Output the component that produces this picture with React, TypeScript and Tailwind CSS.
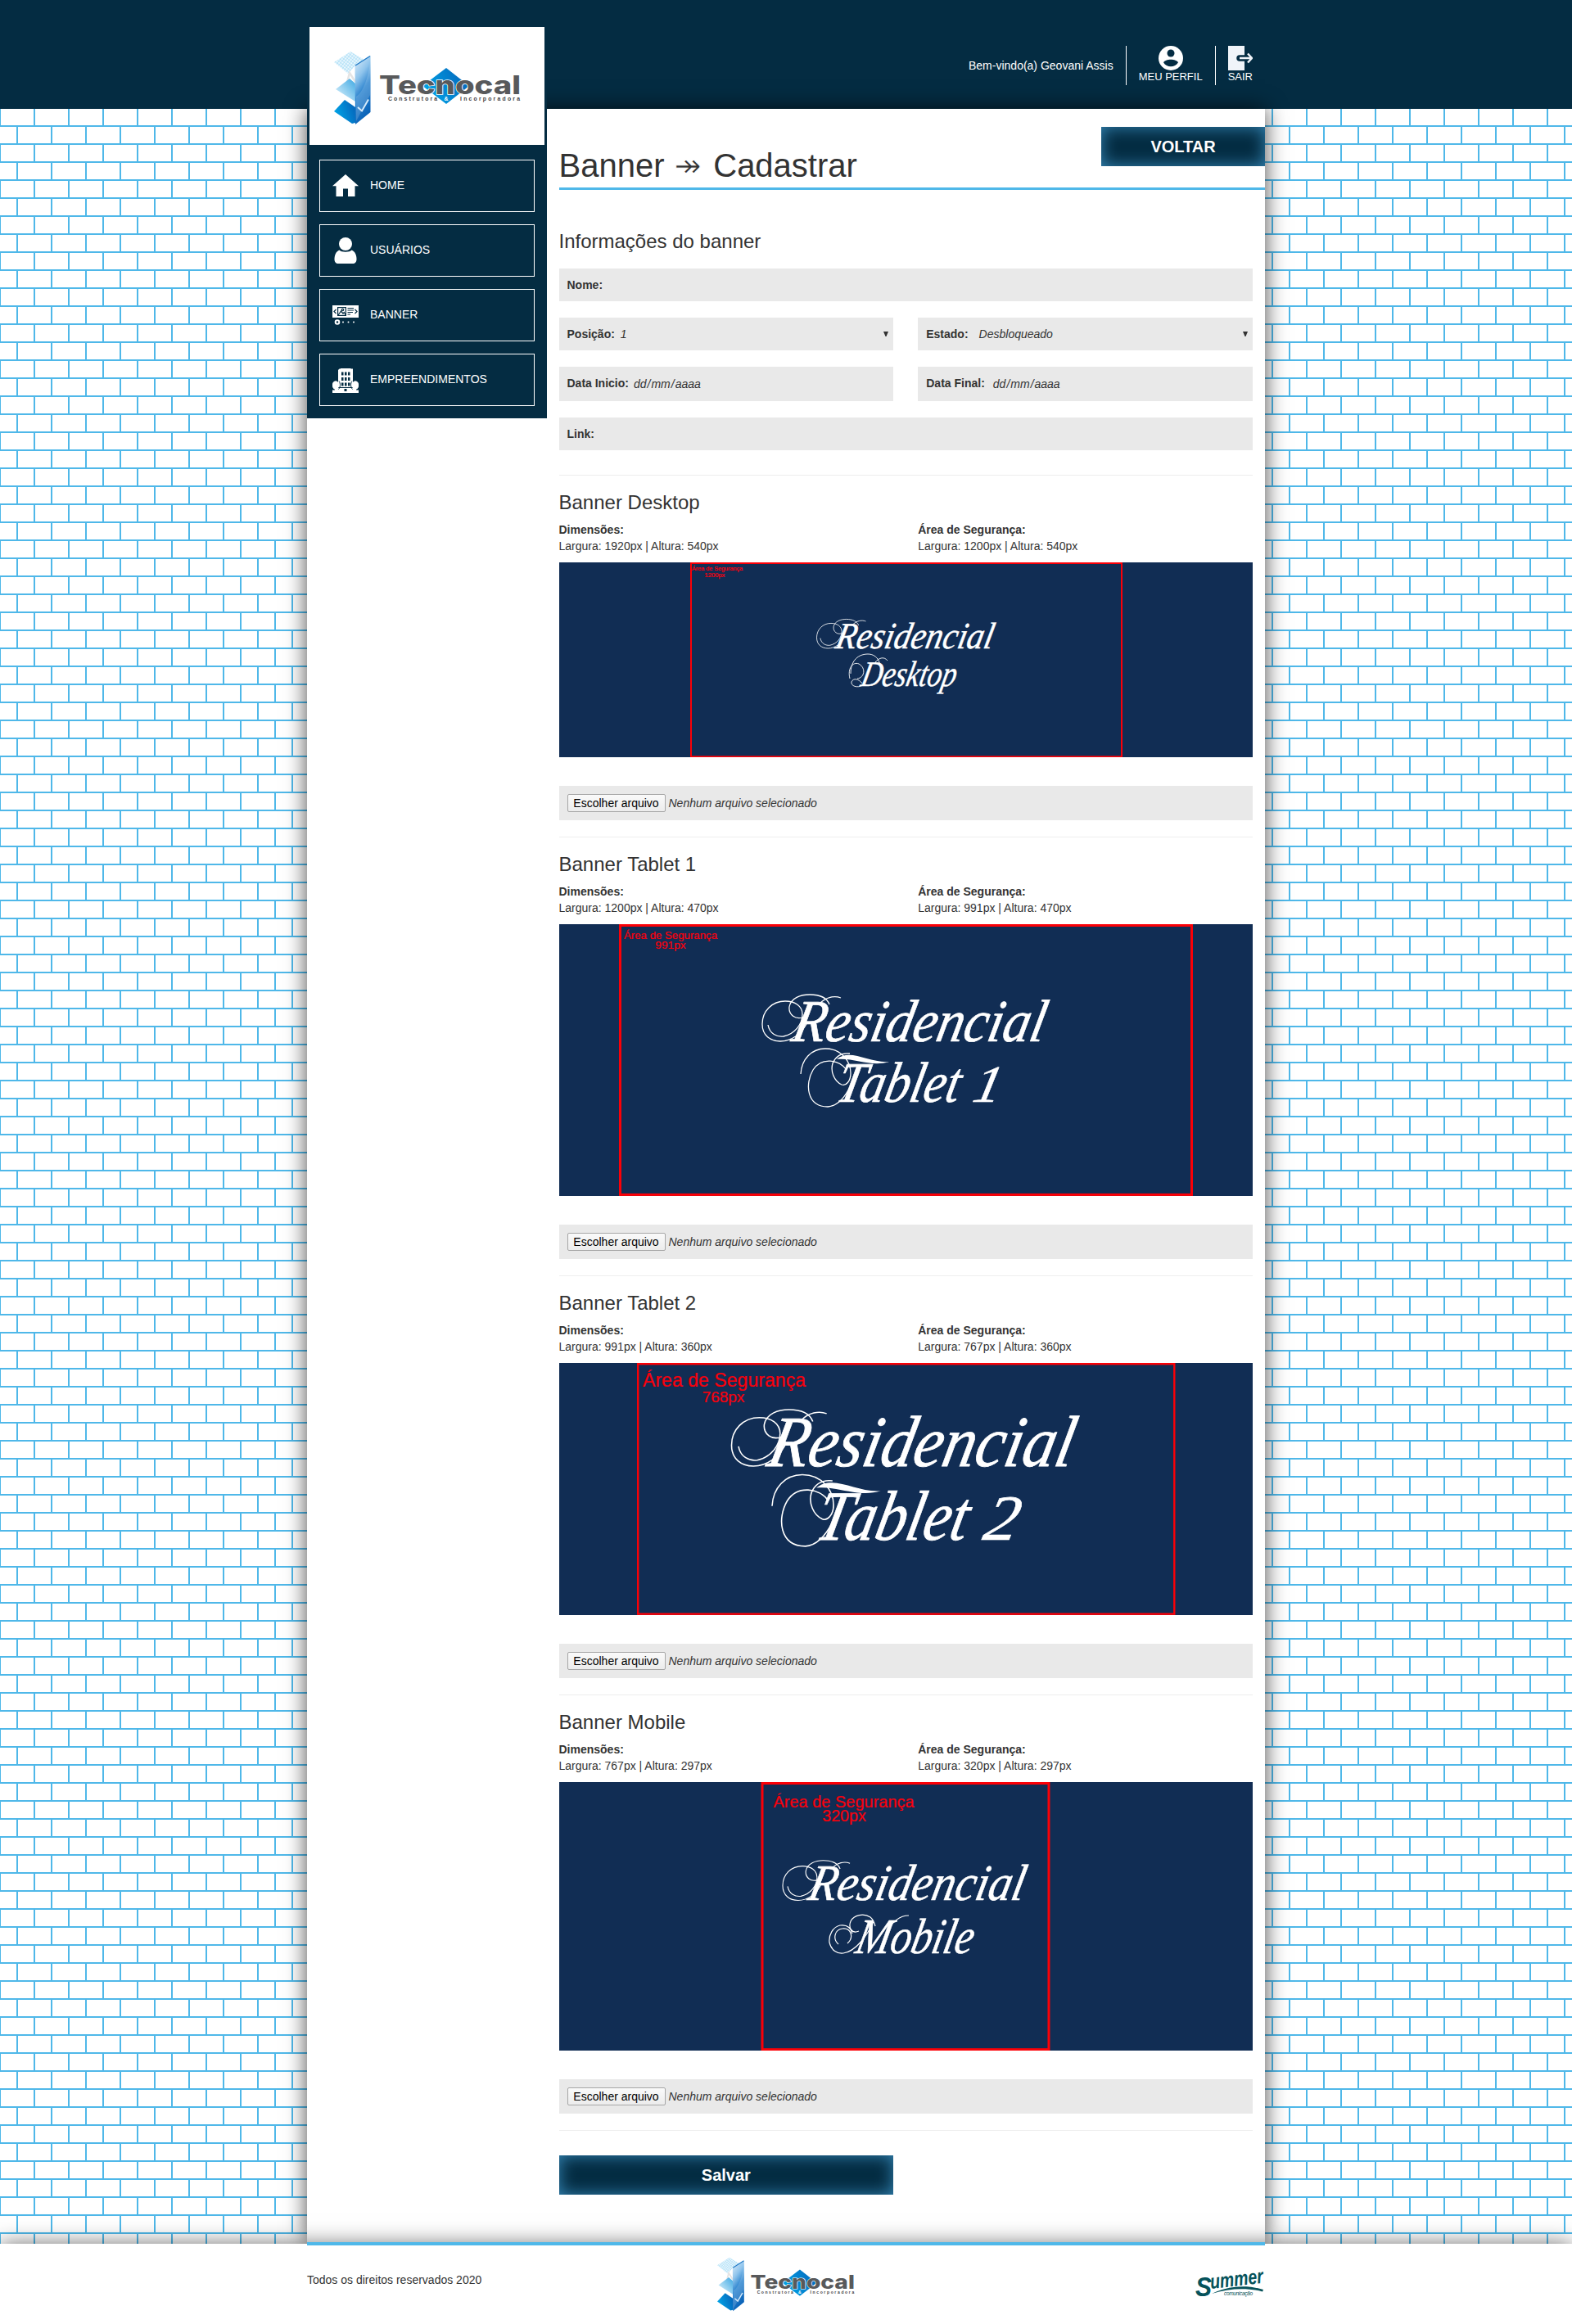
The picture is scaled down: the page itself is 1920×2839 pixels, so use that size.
import type { ReactNode } from "react";

const SERIF = "'Liberation Serif', serif";
const SANS = "'Liberation Sans', Arial, sans-serif";

function Bricks() {
  return (
    <svg className="absolute inset-0 h-full w-full" aria-hidden="true">
      <defs>
        <pattern id="bricks" width="42" height="44" patternUnits="userSpaceOnUse">
          <rect width="42" height="44" fill="#fff" />
          <g fill="#4fb8e9" shapeRendering="crispEdges">
            <rect width="42" height="1" />
            <rect y="21" width="42" height="2" />
            <rect y="43" width="42" height="1" />
            <rect width="1" height="22" />
            <rect x="41" width="1" height="22" />
            <rect x="20" y="22" width="2" height="22" />
          </g>
        </pattern>
      </defs>
      <rect width="100%" height="100%" fill="url(#bricks)" />
    </svg>
  );
}

function Logo({ className, id }: { className: string; id: string }) {
  return (
    <svg viewBox="0 0 228 91" className={className} role="img" aria-label="Tecnocal">
      <defs>
        <linearGradient id={id + "-panel"} x1="0" y1="0" x2="0.3" y2="1">
          <stop offset="0" stopColor="#e3f1fc" />
          <stop offset="0.35" stopColor="#8fc4ec" />
          <stop offset="0.6" stopColor="#2f86d0" />
          <stop offset="1" stopColor="#0a63b8" />
        </linearGradient>
        <linearGradient id={id + "-dia"} x1="0" y1="0.7" x2="1" y2="0.3">
          <stop offset="0" stopColor="#00a8ea" />
          <stop offset="1" stopColor="#0566bb" />
        </linearGradient>
        <linearGradient id={id + "-mid"} x1="0" y1="1" x2="1" y2="0">
          <stop offset="0" stopColor="#e8f7fe" />
          <stop offset="1" stopColor="#3fa9e3" />
        </linearGradient>
        <pattern id={id + "-grid"} width="3" height="3" patternUnits="userSpaceOnUse" patternTransform="rotate(38)">
          <rect width="3" height="3" fill="#eaf7fe" />
          <path d="M0 0H3M0 0V3" stroke="#8fd0f2" strokeWidth="0.9" />
        </pattern>
      </defs>
      <path d="M0 14 20 1 37 11 26 17V18L17 28Z" fill={`url(#${id}-grid)`} />
      <path d="M14 46 19 27 26 38" fill="none" stroke="#e4e4e4" strokeWidth="2.5" />
      <path d="M2 47 19 34 26 40V62Z" fill={`url(#${id}-mid)`} />
      <path d="M0 74 13 60 26 69V88L22 89Z" fill={`url(#${id}-dia)`} />
      <path d="M25.5 18 44.5 6V75L26 90Z" fill={`url(#${id}-panel)`} />
      <path d="M26 18 44 6.5" fill="none" stroke="#1d78c6" strokeWidth="1.4" />
      <path d="M27 56C36 50 42 32 44 14V54L27 86Z" fill="#fff" opacity="0.16" />
      <path d="m29 69 5 4.500 8-14" fill="none" stroke="#d6eafa" strokeWidth="2" />
      <path d="M137 21 165 43 137 65 108 43Z" fill={`url(#${id}-dia)`} />
      <text
        x="55" y="53.300" fontFamily="Inter, sans-serif" fontWeight="800" fontSize="31" textLength="173"
        lengthAdjust="spacingAndGlyphs" fill="#58595b" stroke="#fff" strokeWidth="1.400" paintOrder="stroke"
      >
        Tecnocal
      </text>
      <g fontFamily={SANS} fontWeight="700" fontSize="6.800" fill="#3f4042">
        <text x="66" y="61.300" textLength="60">Construtora</text>
        <text x="137" y="61.300" textAnchor="middle" fill="#fff">&amp;</text>
        <text x="154" y="61.300" textLength="73">Incorporadora</text>
      </g>
    </svg>
  );
}

function SummerLogo() {
  return (
    <svg viewBox="0 0 84 31" className="h-[31px] w-[84px] overflow-visible" role="img" aria-label="Summer comunicação">
      <g fill="#06525a" fontFamily={SANS} fontStyle="italic" fontWeight="700">
        <text x="-1" y="29.500" fontSize="33" textLength="20" lengthAdjust="spacingAndGlyphs">S</text>
        <text x="18" y="21" fontSize="25" textLength="65" lengthAdjust="spacingAndGlyphs" transform="rotate(-6.5 18 21)">
          ummer
        </text>
        <path d="M19 27C38 17.500 62 15.500 82 22L81 24.500C62 19.500 40 20.500 19 27Z" />
        <text x="34" y="29" fontSize="6.500" fontWeight="400" textLength="35">comunicação</text>
      </g>
    </svg>
  );
}

const HomeIcon = () => (
  <svg viewBox="0 0 32 32" className="size-8" fill="#fff">
    <path d="M16 2 32 16.200H27.500V29H19V19.500H13V29H4.500V16.200H0Z" />
  </svg>
);

const UserIcon = () => (
  <svg viewBox="0 0 32 32" className="size-8" fill="#fff">
    <circle cx="16" cy="8" r="8" />
    <path d="M8.500 15.500C11 18.500 21 18.500 23.500 15.500 27.500 17 29.500 21.500 29.500 26.500 29.500 30 28 32 24.500 32H7.500C4 32 2.500 30 2.500 26.500 2.500 21.500 4.500 17 8.500 15.500Z" />
  </svg>
);

const BannerIcon = () => (
  <svg viewBox="0 0 32 32" className="size-8">
    <rect y="4" width="32" height="15" fill="#fff" />
    <g fill="none" stroke="#042c42" strokeWidth="1.200">
      <path d="M4.500 9 2 11.500 4.500 14M27.500 9 30 11.500 27.500 14" />
      <rect x="6.600" y="6.600" width="9.800" height="9.800" />
      <path d="m7 16 3.500-5 2.500 3 1.300-1.500 2 3.500" />
      <circle cx="12.500" cy="9.500" r="1.200" />
      <path d="M18.500 7.500H26M18.500 10H26M18.500 12.500H25M18.500 15H22" />
    </g>
    <circle cx="6" cy="24.500" r="2.300" fill="none" stroke="#fff" strokeWidth="2" />
    <g fill="#fff">
      <circle cx="13" cy="24.500" r="1" />
      <circle cx="19.500" cy="24.500" r="1" />
      <circle cx="26" cy="24.500" r="1" />
    </g>
  </svg>
);

const BuildingIcon = () => (
  <svg viewBox="0 0 32 32" className="size-8" fill="#fff">
    <path d="M8.500 2.500H10V2H22.500V2.500H25V25H7V4Z" />
    <ellipse cx="4" cy="22.500" rx="4.200" ry="5.200" />
    <ellipse cx="28" cy="22.500" rx="4.200" ry="5.200" />
    <path d="M0 28.500H3V26H29V28.500H32V32H0Z" />
    <path
      d="M11 6.500h2.500v4H11zM15 6.500h2.500v4H15zM19 6.500h2.500v4H19zM11 13h2.500v4H11zM15 13h2.500v4H15zM19 13h2.500v4H19zM11 19.500h2.500v4H11zM15 19.500h2.500v4H15zM19 19.500h2.500v4H19zM14.500 27h3v3h-3z"
      fill="#042c42"
    />
    <path d="M8 17.500C10 20 10 25 7.500 27.500M24 17.500C22 20 22 25 24.500 27.500" fill="none" stroke="#042c42" />
  </svg>
);

const menu: { label: string; icon: ReactNode }[] = [
  { label: "HOME", icon: <HomeIcon /> },
  { label: "USUÁRIOS", icon: <UserIcon /> },
  { label: "BANNER", icon: <BannerIcon /> },
  { label: "EMPREENDIMENTOS", icon: <BuildingIcon /> },
];

function Script({ x, y, size, width, children }: { x: number; y: number; size: number; width: number; children: ReactNode }) {
  return (
    <text
      transform={`translate(${x} ${y}) skewX(-12)`}
      fontSize={size}
      textLength={width}
      lengthAdjust="spacingAndGlyphs"
      stroke="#fff"
      strokeWidth={size / 110}
    >
      {children}
    </text>
  );
}

/* Lettering is written in a 351-unit wide space whose origin is the left end of the swash, on the baseline. */
function Residencial({ x, y, scale }: { x: number; y: number; scale: number }) {
  return (
    <g transform={`translate(${x} ${y}) scale(${scale})`}>
      <Script x={34} y={0} size={73} width={308}>Residencial</Script>
      <path
        d="M7-20C9-9 18-5 26-6 40-9 49-21 49-33 49-43 40-49 28-49 12-49 0-37 0-21 0-7 10 0 22 0 36 0 48-9 55-23M52-30C40-25 32-33 33-42 35-53 47-57 58-57 70-57 79-53 82-45M70-46C78-54 88-56 96-53"
        fill="none" stroke="#fff" strokeWidth="1.300"
      />
    </g>
  );
}

function TabletLine({ x, y, scale, digit }: { x: number; y: number; scale: number; digit: string }) {
  return (
    <g transform={`translate(${x} ${y}) scale(${scale})`}>
      <Script x={41} y={0} size={70} width={150}>Tablet</Script>
      <Script x={208} y={0} size={64} width={34}>{digit}</Script>
      <path
        d="M0-34C1-52 13-65 30-65 50-65 61-49 61-35 61-25 55-19 50-21 41-25 36-37 39-47 43-57 51-60 60-59M56-39C47-52 25-55 15-39 5-22 7 6 33 6 46 5 54-6 60-18"
        fill="none" stroke="#fff" strokeWidth="1.300"
      />
      <path d="M44-52C60-66 84-47 108-49 86-42 66-54 44-52Z" fill="#fff" />
    </g>
  );
}

type Preview = {
  title: string;
  size: string;
  safe: string;
  height: number;
  frame: { x: number; w: number; stroke: number };
  note: { x: number; y: number; size: number; width: number; value: string; vx: number; vy: number; vsize: number };
  art: ReactNode;
};

const previews: Preview[] = [
  {
    title: "Banner Desktop",
    size: "Largura: 1920px | Altura: 540px",
    safe: "Largura: 1200px | Altura: 540px",
    height: 238.36,
    frame: { x: 160, w: 528, stroke: 2 },
    note: { x: 162, y: 10, size: 7.2, width: 62, value: "1200px", vx: 190, vy: 18, vsize: 7.6 },
    art: (
      <>
        <Residencial x={314.5} y={105} scale={0.624} />
        <Script x={367} y={151} size={44} width={116}>Desktop</Script>
        <path
          d="M355 142C352 130 358 121 366 124 375 129 373 141 364 142M356 136C356 119 366 112 377 112 389 112 395 124 391 138M386 122C391 116 397 115 401 120M371 150C364 154 356 151 357 146 359 141 366 142 370 148"
          fill="none" stroke="#fff" strokeWidth="0.900"
        />
      </>
    ),
  },
  {
    title: "Banner Tablet 1",
    size: "Largura: 1200px | Altura: 470px",
    safe: "Largura: 991px | Altura: 470px",
    height: 331.94,
    frame: { x: 73, w: 701, stroke: 3 },
    note: { x: 79, y: 18.5, size: 13.2, width: 114, value: "991px", vx: 136, vy: 30, vsize: 13.7 },
    art: (
      <>
        <Residencial x={248} y={143} scale={1} />
        <TabletLine x={295} y={217} scale={1} digit="1" />
      </>
    ),
  },
  {
    title: "Banner Tablet 2",
    size: "Largura: 991px | Altura: 360px",
    safe: "Largura: 767px | Altura: 360px",
    height: 307.87,
    frame: { x: 95, w: 657.5, stroke: 2.4 },
    note: { x: 102, y: 29.5, size: 23, width: 199, value: "768px", vx: 200.5, vy: 48.5, vsize: 19 },
    art: (
      <>
        <Residencial x={210.5} y={126} scale={1.21} />
        <TabletLine x={260} y={216.5} scale={1.23} digit="2" />
      </>
    ),
  },
  {
    title: "Banner Mobile",
    size: "Largura: 767px | Altura: 297px",
    safe: "Largura: 320px | Altura: 297px",
    height: 328.17,
    frame: { x: 246.5, w: 353, stroke: 3 },
    note: { x: 261.5, y: 31.5, size: 19.8, width: 172, value: "320px", vx: 348, vy: 48, vsize: 19.6 },
    art: (
      <>
        <Residencial x={273} y={144.5} scale={0.855} />
        <Script x={360} y={209} size={61} width={143}>Mobile</Script>
        <path
          d="M341 198C334 192 336 180 346 179 357 178 360 190 352 197M358 185C356 177 350 174 343 175 334 177 329 187 330 196 332 205 339 210 347 209 362 207 376 188 384 170M366 182C357 186 353 177 356 170 360 162 372 160 380 165 384 168 385 172 386 176M400 184C405 174 414 163 427 163"
          fill="none" stroke="#fff" strokeWidth="1.200"
        />
      </>
    ),
  },
];

function BannerArt({ p }: { p: Preview }) {
  const s = p.frame.stroke;
  return (
    <svg
      viewBox={`0 0 847.5 ${p.height}`}
      className="mt-2.5 block w-full bg-[#112d54]"
      style={{ height: p.height }}
      role="img"
      aria-label={p.title}
    >
      <rect x={p.frame.x + s / 2} y={s / 2} width={p.frame.w - s} height={p.height - s} fill="none" stroke="#fb0007" strokeWidth={s} />
      <g fill="#f7000c" fontFamily={SANS} stroke="#f7000c" strokeWidth="0.250">
        <text x={p.note.x} y={p.note.y} fontSize={p.note.size} textLength={p.note.width}>Área de Segurança</text>
        <text x={p.note.vx} y={p.note.vy} fontSize={p.note.vsize} textAnchor="middle">{p.note.value}</text>
      </g>
      <g fill="#fff" fontFamily={SERIF} fontStyle="italic">{p.art}</g>
    </svg>
  );
}

function Field({ label, children }: { label: string; children?: ReactNode }) {
  return (
    <div className="flex h-10 bg-[#e9e9e9] px-2.5 pt-2.5">
      <b>{label}</b>
      {children}
    </div>
  );
}

const Caret = () => (
  <svg viewBox="0 0 6 6" className="-mr-[4px] mt-[7px] ml-auto size-1.5">
    <path d="M0 0H6L3.500 6H2.500Z" fill="#333" />
  </svg>
);

const DateMask = () => (
  <i className="mt-px">
    <span className="px-px">dd</span>/<span className="px-px">mm</span>/<span className="px-px">aaaa</span>
  </i>
);

function BannerSection({ p }: { p: Preview }) {
  return (
    <section className="border-t border-[#eee] pt-5 pb-5">
      <h2 className="text-2xl leading-[26px]">{p.title}</h2>
      <div className="mt-2.5 grid grid-cols-2 gap-[30px]">
        <p><b>Dimensões:</b><br />{p.size}</p>
        <p><b>Área de Segurança:</b><br />{p.safe}</p>
      </div>
      <BannerArt p={p} />
      <div className="mt-[35px] flex h-[42px] items-center bg-[#e9e9e9] px-2.5">
        <button className="h-[22px] w-[120px] rounded-[2px] border border-[#a6a6a6] bg-linear-to-b from-[#fafafa] to-[#ececec] leading-[18px] text-black">
          Escolher arquivo
        </button>
        <i className="ml-[4px]">Nenhum arquivo selecionado</i>
      </div>
    </section>
  );
}

export default function App() {
  return (
    <div className="relative w-[1920px] overflow-hidden font-['Liberation_Sans',Arial,sans-serif] text-sm leading-5 text-[#333]">
      <Bricks />
      <header className="relative h-[133px] bg-[#042c42] text-white">
        <div className="mx-auto flex w-[1170px] justify-end pt-14 pr-[15px]">
          <p className="pt-[14px] pr-[15px]">Bem-vindo(a) Geovani Assis</p>
          <a className="flex h-12 flex-col items-center border-l border-white px-[15px]">
            <svg viewBox="0 0 20 20" className="size-[30px]">
              <circle cx="10" cy="10" r="10" fill="#fff" />
              <circle cx="10" cy="6" r="3" fill="#042c42" />
              <path d="M4 13.500C5.500 10.300 14.500 10.300 16 13.500 13.500 18 6.500 18 4 13.500Z" fill="#042c42" />
            </svg>
            <span className="text-[13px] leading-4">MEU PERFIL</span>
          </a>
          <a className="flex h-12 flex-col items-center border-l border-white pl-[15px]">
            <svg viewBox="0 0 30 30" className="size-[30px]" fill="none">
              <path d="M0 0H20V30H0Z" fill="#f0f4f9" />
              <path d="M26 15H14" stroke="#042c42" strokeWidth="7.500" strokeLinecap="round" />
              <path d="M28.500 15H14M24 9.500 29 15 24 20.500" stroke="#f0f4f9" strokeWidth="2.400" />
            </svg>
            <span className="text-[13px] leading-4">SAIR</span>
          </a>
        </div>
      </header>

      <div className="relative mx-auto flex h-[2608px] w-[1170px] items-start bg-white shadow-[0_0_25px_rgba(0,0,0,0.7)]">
        <aside className="-mt-[100px] w-[293px] shrink-0 bg-[#042c42] px-[3px] pb-[15px]">
          <div className="h-36 bg-white pt-[29px] pl-[30px]">
            <Logo id="top" className="h-[91px] w-[228px]" />
          </div>
          <nav className="mt-[18px] flex flex-col gap-[15px] px-3">
            {menu.map((m) => (
              <a key={m.label} className="flex h-16 items-center gap-[14px] border border-white pl-[15px] text-white">
                {m.icon}
                <span className="-mt-0.5">{m.label}</span>
              </a>
            ))}
          </nav>
        </aside>

        <main className="-ml-[0.5px] w-[877.5px] pl-[15px]">
          <div className="flex h-[99px] items-end justify-between border-b-[3px] border-[#4fb8e9]">
            <h1 className="pb-[5px] text-[40px] leading-[44px]">
              Banner <span className="mr-[3px] ml-px font-['DejaVu_Sans',sans-serif] leading-none [-webkit-text-stroke:1px_white]">↠</span> Cadastrar
            </h1>
            <button className="mt-[22px] h-12 w-[200px] self-start bg-[#042c42] text-xl font-bold text-white shadow-[inset_0_0_20px_#3688b8]">
              VOLTAR
            </button>
          </div>

          <div className="pr-[15px]">
            <h2 className="mt-[50px] text-2xl leading-[26px]">Informações do banner</h2>
            <div className="mt-5 mb-[30px] flex flex-col gap-5">
              <Field label="Nome:" />
              <div className="grid grid-cols-2 gap-[30px]">
                <Field label="Posição:"><i className="ml-[7px]">1</i><Caret /></Field>
                <Field label="Estado:"><i className="ml-[13px]">Desbloqueado</i><Caret /></Field>
              </div>
              <div className="grid grid-cols-2 gap-[30px]">
                <div className="flex h-[42px] gap-[5px] bg-[#e9e9e9] px-2.5 pt-2.5"><b>Data Inicio:</b><DateMask /></div>
                <div className="flex h-[42px] gap-[9px] bg-[#e9e9e9] px-2.5 pt-2.5"><b>Data Final:</b><DateMask /></div>
              </div>
              <Field label="Link:" />
            </div>
            {previews.map((p) => (
              <BannerSection key={p.title} p={p} />
            ))}
            <div className="border-t border-[#eee] pt-[30px]">
              <button className="h-12 w-[408.75px] bg-[#042c42] text-xl font-bold text-white shadow-[inset_0_0_20px_#3688b8]">
                Salvar
              </button>
            </div>
          </div>
        </main>
      </div>

      <footer className="relative h-[98px] bg-white shadow-[0_0_25px_rgba(0,0,0,0.55)]">
        <div className="relative -top-0.5 mx-auto grid h-[100px] w-[1170px] grid-cols-3 border-t-4 border-[#4fb8e9]">
          <p className="pt-8">Todos os direitos reservados 2020</p>
          <div className="flex justify-center pt-[14px]">
            <Logo id="foot" className="h-[67px] w-[168px]" />
          </div>
          <div className="flex justify-end pt-8">
            <SummerLogo />
          </div>
        </div>
      </footer>
    </div>
  );
}
